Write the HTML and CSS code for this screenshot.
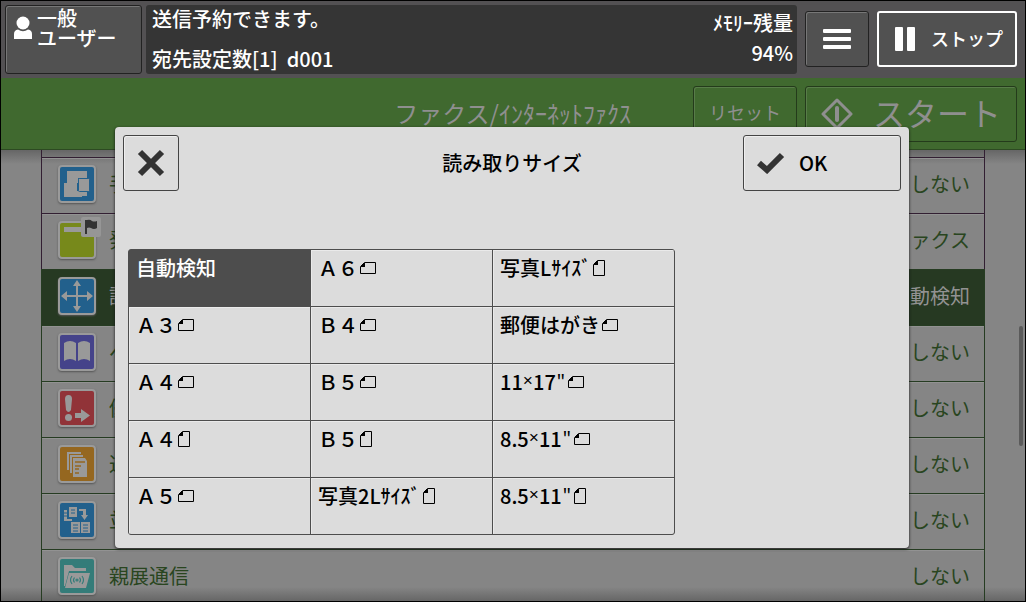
FILE: index.html
```html
<!DOCTYPE html>
<html lang="ja">
<head>
    <meta charset="UTF-8">
    <meta name="viewport" content="width=device-width, initial-scale=1.0">
    <title>読み取りサイズ</title>
    <link rel="stylesheet" href="styles.css">
</head>
<body>
    <!-- paper orientation marks used in the size list -->
    <svg class="symbols" aria-hidden="true">
        <symbol id="landscape" viewBox="0 0 16 12">
            <path d="M4.5 .5H15.5V11.5H.5V4.5Z" fill="none" stroke="currentColor"/>
            <path d="M4 1H5V5H1V4Z" fill="currentColor"/>
        </symbol>
        <symbol id="portrait" viewBox="0 0 12 16">
            <path d="M4.5 .5H11.5V15.5H.5V4.5Z" fill="none" stroke="currentColor"/>
            <path d="M4 1H5V5H1V4Z" fill="currentColor"/>
        </symbol>
    </svg>

    <header class="status-bar">
        <button class="btn user">
            <svg width="20" height="24" viewBox="0 0 20 24" fill="#fff"><circle cx="10" cy="7" r="6.5"/><path d="M1 23V18Q1 14 5 13.5Q10 17 15 13.5Q19 14 19 18V23Z"/></svg>
            <span>一般<br>ユーザー</span>
        </button>
        <div class="info">
            <div class="message">
                <p>送信予約できます。</p>
                <p>宛先設定数[1]&nbsp; d001</p>
            </div>
            <div class="memory">
                <p>ﾒﾓﾘｰ残量</p>
                <p>94%</p>
            </div>
        </div>
        <button class="btn menu" aria-label="メニュー">
            <svg width="28" height="20" viewBox="0 0 28 20" fill="#fff"><rect width="28" height="4" rx="1"/><rect y="8" width="28" height="4" rx="1"/><rect y="16" width="28" height="4" rx="1"/></svg>
        </button>
        <button class="btn stop">
            <svg width="20" height="24" viewBox="0 0 20 24" fill="#fff"><rect width="8" height="24" rx="1"/><rect x="12" width="8" height="24" rx="1"/></svg>
            <span>ストップ</span>
        </button>
    </header>

    <div class="app-bar">
        <h1>ファクス/ｲﾝﾀｰﾈｯﾄﾌｧｸｽ</h1>
        <button class="btn reset"><span>リセット</span></button>
        <button class="btn start">
            <svg width="32" height="32" viewBox="0 0 32 32" fill="none" stroke="#8f8f8f" stroke-linejoin="round" stroke-linecap="round"><path d="M16 2L30 16L16 30L2 16Z" stroke-width="3"/><path d="M16 10V22" stroke-width="4"/></svg>
            <span>スタート</span>
        </button>
    </div>

    <main>
        <ul class="features">
            <li class="purple spacer"></li>
            <li class="purple">
                <svg class="tile blue" viewBox="0 0 34 34"><path d="M7 4H27V11H18V16H7Z"/><path d="M4 16H17V24H22V30H4Z"/><rect x="18.5" y="11.5" width="11" height="13" rx="1" stroke="#22608c"/><rect x="21" y="25" width="6" height="4"/></svg>
                <span class="label">手</span><span class="value">しない</span>
            </li>
            <li class="purple">
                <svg class="tile lime" viewBox="0 0 34 34"><rect x="4" y="4" width="22" height="5"/></svg>
                <svg class="flag" viewBox="0 0 20 20"><rect width="20" height="20" rx="2" fill="#969696"/><path d="M4 3H6V17H4ZM6 3Q9 2 11 4Q13 5 16 4V11Q13 13 10 11Q8 10 6 11Z" fill="#333"/></svg>
                <span class="label">発</span><span class="value">ファクス</span>
            </li>
            <li class="selected">
                <svg class="tile blue" viewBox="0 0 34 34"><path d="M16 7V16H7V12L1 17L7 22V18H16V27H13L17 33L21 27H18V18H27V22L33 17L27 12V16H18V7H21L17 1L13 7Z"/></svg>
                <span class="label">読</span><span class="value">自動検知</span>
            </li>
            <li>
                <svg class="tile indigo" viewBox="0 0 34 34"><path d="M4 8Q10 4 16 8V26Q10 22 4 26ZM18 8Q24 4 30 8V26Q24 22 18 26Z"/></svg>
                <span class="label">ペ</span><span class="value">しない</span>
            </li>
            <li>
                <svg class="tile red" viewBox="0 0 34 34"><path d="M5 8Q5 4 8.5 4T12 8L11 19Q8.5 23 6 19Z"/><circle cx="8.5" cy="26.5" r="3.5"/><path d="M15 22H21V18L30 24.5L21 31V27H15Z"/></svg>
                <span class="label">優</span><span class="value">しない</span>
            </li>
            <li>
                <svg class="tile orange" viewBox="0 0 34 34"><path d="M7 5H21V7H9V23H7ZM10 8H23V10H12V26H10ZM13 11H25L27 14V30H13Z"/><path d="M15 15H25M15 19H21M15 22H19M15 26H19" stroke="#956720" stroke-width="1.5"/></svg>
                <span class="label">送</span><span class="value">しない</span>
            </li>
            <li>
                <svg class="tile blue" viewBox="0 0 34 34"><path d="M9 4H17V14H9ZM4 7H7V16H12V18H4ZM19 6H26V12H28L24.5 17L21 12H23V8H19ZM11 19H20V30H11ZM21 19H30V30H21Z"/><path d="M11 7H15M11 10H15M13 22H18M13 25H18M13 28H18M23 22H28M23 25H28M23 28H28M4 10H7M4 13H7" stroke="#22608c" stroke-width="1"/></svg>
                <span class="label">並</span><span class="value">しない</span>
            </li>
            <li>
                <svg class="tile teal" viewBox="0 0 34 34"><path d="M4 6H12L15 9H26V12H9L5 27H4Z"/><path d="M9 14H30L26 29H5Z"/><g fill="none" stroke="#347c79" stroke-width="1.2"><circle cx="17" cy="21" r="1"/><path d="M14.5 18.5Q12.5 21 14.5 23.5M19.5 18.5Q21.5 21 19.5 23.5M12 17Q9 21 12 25M22 17Q25 21 22 25"/></g></svg>
                <span class="label">親展通信</span><span class="value">しない</span>
            </li>
        </ul>
        <div class="scrollbar"></div>
    </main>

    <section class="dialog" role="dialog" aria-labelledby="dialog-title">
        <div class="dialog-head">
            <button class="btn close" aria-label="閉じる">
                <svg width="28" height="28" viewBox="0 0 28 28" fill="none" stroke="#333" stroke-width="6"><path d="M3 3L25 25M25 3L3 25"/></svg>
            </button>
            <h2 id="dialog-title">読み取りサイズ</h2>
            <button class="btn ok">
                <svg width="28" height="22" viewBox="0 0 28 22" fill="none" stroke="#333" stroke-width="6"><path d="M2 11L10 18L25 3"/></svg>
                OK
            </button>
        </div>
        <div class="sizes">
            <button class="active">自動検知</button>
            <button>Ａ６<svg class="paper wide"><use href="#landscape"/></svg></button>
            <button>写真Lｻｲｽﾞ<svg class="paper tall"><use href="#portrait"/></svg></button>
            <button>Ａ３<svg class="paper wide"><use href="#landscape"/></svg></button>
            <button>Ｂ４<svg class="paper wide"><use href="#landscape"/></svg></button>
            <button>郵便はがき<svg class="paper wide"><use href="#landscape"/></svg></button>
            <button>Ａ４<svg class="paper wide"><use href="#landscape"/></svg></button>
            <button>Ｂ５<svg class="paper wide"><use href="#landscape"/></svg></button>
            <button>11<span class="sign">×</span>17<span class="sign">″</span><svg class="paper wide"><use href="#landscape"/></svg></button>
            <button>Ａ４<svg class="paper tall"><use href="#portrait"/></svg></button>
            <button>Ｂ５<svg class="paper tall"><use href="#portrait"/></svg></button>
            <button>8.5<span class="sign">×</span>11<span class="sign">″</span><svg class="paper wide"><use href="#landscape"/></svg></button>
            <button>Ａ５<svg class="paper wide"><use href="#landscape"/></svg></button>
            <button>写真2Lｻｲｽﾞ<svg class="paper tall"><use href="#portrait"/></svg></button>
            <button>8.5<span class="sign">×</span>11<span class="sign">″</span><svg class="paper tall"><use href="#portrait"/></svg></button>
        </div>
    </section>
</body>
</html>
```
FILE: styles.css
```css
*{
    margin: 0;
    padding: 0;
    box-sizing: border-box;
}
body{
    display: flex;
    flex-direction: column;
    position: relative;
    height: 100vh;
    overflow: hidden;
    border: 1px solid #000;
    background: #858585;
    font-family: 'Noto Sans CJK JP', sans-serif;
    font-size: 20px;
    line-height: 20px;
}
button{
    font: inherit;
    color: inherit;
    cursor: pointer;
}
.symbols{
    position: absolute;
    width: 0;
    height: 0;
}
.btn{
    display: flex;
    align-items: center;
    height: 56px;
    border: 1px solid #222;
    border-radius: 3px;
    background: #515151;
    box-shadow: inset 1px 1px #777;
}

/* status bar */
.status-bar{
    display: flex;
    align-items: center;
    flex-shrink: 0;
    gap: 8px;
    height: 77px;
    padding: 0 8px 1px 4px;
    background: #535153;
    color: #fff;
    font-weight: 500;
}
.status-bar .user{
    align-items: flex-start;
    gap: 4px;
    width: 137px;
    height: 69px;
    margin-right: -4px;
    padding: 2px 7px;
    text-align: left;
}
.user svg{
    margin-top: 8px;
}
.info{
    flex: 1;
    display: flex;
    justify-content: space-between;
    height: 69px;
    padding: 4px 4px 4px 6px;
    border-radius: 3px;
    background: #353535;
}
.message{
    display: flex;
    flex-direction: column;
    gap: 20px;
}
.memory{
    display: flex;
    flex-direction: column;
    gap: 10px;
    padding-top: 4px;
    text-align: right;
}
.menu{
    justify-content: center;
    width: 64px;
}
.status-bar .stop{
    gap: 16px;
    width: 140px;
    padding-left: 16px;
    border: 2px solid #fff;
    box-shadow: none;
    font-size: 18px;
}
.stop span,
.app-bar span{
    padding-bottom: 3px;
}

/* green application bar */
.app-bar{
    display: flex;
    align-items: center;
    flex-shrink: 0;
    gap: 8px;
    height: 72px;
    padding: 0 8px;
    background: #40692f;
    border-bottom: 1px solid #2d4a22;
    color: #8f8f8f;
}
.app-bar h1{
    flex: 1;
    margin-right: 54px;
    padding-bottom: 2px;
    font-size: 24px;
    line-height: 24px;
    font-weight: 400;
    text-align: right;
}
.app-bar .btn{
    background: #40692f;
    border-color: #243b1b;
    box-shadow: inset 1px 1px #587c49;
}
.reset{
    justify-content: center;
    width: 104px;
    font-size: 18px;
}
.start{
    gap: 20px;
    width: 212px;
    padding-left: 15px;
    font-size: 32px;
}

/* feature list behind the dialog */
main{
    position: relative;
    flex: 1;
    overflow: hidden;
    padding: 0 40px;
    background: linear-gradient(#666, #858585 14px, #858585 calc(100% - 14px), #666);
}
.features{
    list-style: none;
}
.features li{
    position: relative;
    display: flex;
    align-items: center;
    height: 56px;
    padding: 0 14px 3px 16px;
    border: 1px solid #263c22;
    border-width: 1px 1px 0 1px;
    box-shadow: inset 0 1px #929292;
    color: #294520;
}
.features .purple{
    border-color: #321f32;
}
.features .spacer{
    height: 7px;
    border-top: 0;
    box-shadow: none;
}
.features .selected{
    background: #263922;
    box-shadow: none;
    color: #929292;
}
.tile{
    width: 38px;
    height: 38px;
    border: 2px solid #9a9a9a;
    border-radius: 4px;
    box-shadow: 0 1px 2px #555;
    fill: #999;
}
.blue{ background: #22608c; }
.lime{ background: #77891b; }
.indigo{ background: #45438a; }
.red{ background: #913338; }
.orange{ background: #956720; }
.teal{ background: #347c79; }
.flag{
    position: absolute;
    left: 39px;
    top: 3px;
    width: 20px;
    height: 20px;
}
.label{
    margin-left: 13px;
}
.value{
    margin-left: auto;
}
.scrollbar{
    position: absolute;
    right: 2px;
    top: 176px;
    width: 4px;
    height: 120px;
    border-radius: 2px;
    background: #5a5a5a;
}

/* dialog */
.dialog{
    position: absolute;
    top: 126px;
    left: 114px;
    right: 116px;
    padding: 8px 8px 13px;
    border-radius: 4px;
    background: #dcdcdc;
    box-shadow: 0 1px 3px #111;
    color: #000;
    font-weight: 500;
}
.dialog .btn{
    border-color: #444;
    background: #dcdcdc;
    box-shadow: inset 1px 1px #eee;
}
.dialog-head{
    display: grid;
    grid-template-columns: 1fr auto 1fr;
    align-items: center;
}
.dialog h2{
    font-size: 20px;
    font-weight: 500;
}
.close{
    justify-content: center;
    width: 56px;
}
.ok{
    justify-self: end;
    gap: 14px;
    width: 158px;
    padding-left: 13px;
}
.sizes{
    display: grid;
    grid-template-columns: repeat(3, 181px);
    grid-auto-rows: 56px;
    gap: 1px;
    width: fit-content;
    margin: 58px 0 0 5px;
    border: 1px solid #4d4d4d;
    border-radius: 3px;
    background: #4d4d4d;
    overflow: hidden;
}
.sizes button{
    display: flex;
    align-items: center;
    align-self: stretch;
    padding: 0 7px 20px;
    border: 0;
    background: #dcdcdc;
    box-shadow: inset 1px 1px #eaeaea;
    text-align: left;
}
.sizes .active{
    background: #4d4d4d;
    box-shadow: none;
    color: #fff;
}
.sign{
    font-family: 'Liberation Mono', monospace;
    font-size: 17px;
}
.paper{
    margin-left: 2px;
}
.wide{
    width: 16px;
    height: 12px;
}
.tall{
    width: 12px;
    height: 16px;
}
```
